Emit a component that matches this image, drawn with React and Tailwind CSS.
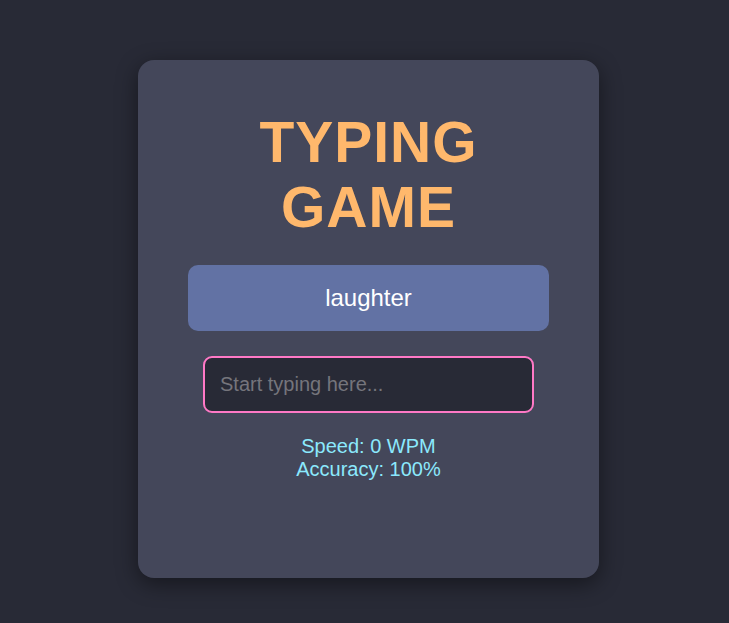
import React, { useState } from 'react';

const App = () => {
  const [typed, setTyped] = useState('');
  const word = 'laughter';

  return (
    <div
      className="min-h-screen w-full bg-[#282a36] pt-[60px] pl-[138px]"
      style={{ fontFamily: '"Liberation Sans", Arial, sans-serif' }}
    >
      <div className="w-[461px] h-[518px] rounded-[16px] bg-[#44475a] shadow-[0_6px_22px_rgba(0,0,0,0.45)] pt-[50px] px-[50px] flex flex-col items-center">
        {/* title */}
        <h1 className="text-[57px] leading-[1.149] font-bold tracking-[1px] text-[#ffb86c] text-center">
          TYPING
          <br />
          GAME
        </h1>

        {/* current word */}
        <div className="mt-[24px] w-full h-[66px] rounded-[10px] bg-[#6272a4] flex items-center justify-center text-[24px] text-white">
          {word}
        </div>

        <input
          className="mt-[25px] w-[331px] h-[57px] rounded-[9px] border-2 border-[#ff79c6] bg-[#282a36] px-[15px] text-[20px] text-white placeholder:text-[#75757c] outline-none"
          type="text"
          value={typed}
          onChange={(e) => setTyped(e.target.value)}
          placeholder="Start typing here..."
        />

        <div className="mt-[22px] text-[20px] leading-[1.149] text-[#8be9fd] text-center">
          <div>Speed: 0 WPM</div>
          <div>Accuracy: 100%</div>
        </div>
      </div>
    </div>
  );
};

export default App;
